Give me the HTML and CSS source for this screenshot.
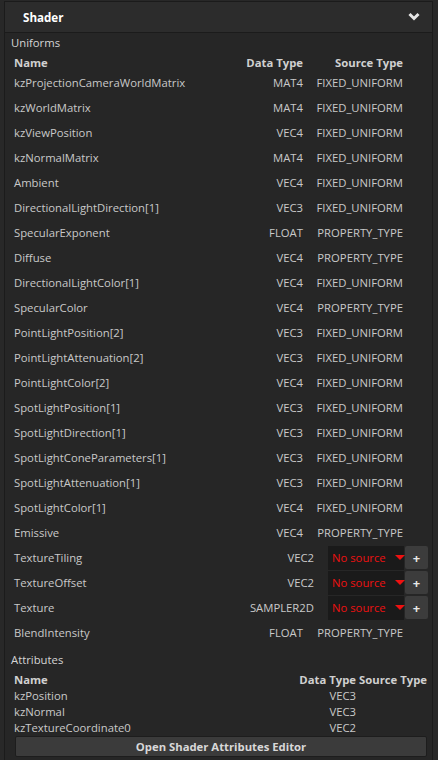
FILE: index.html
```html
<!DOCTYPE html>
<html lang="en">
<head>
  <meta charset="UTF-8" />
  <meta name="viewport" content="width=device-width, initial-scale=1.0" />
  <title>Shader</title>
  <link rel="stylesheet" href="styles.css">
</head>
<body>
  <div class="panel">
    <div class="head">
      <span class="title">Shader</span>
      <svg class="chev" width="12" height="9" viewBox="0 0 12 9"><polyline points="1.5,2 6,6.5 10.5,2" fill="none" stroke="#e6e6e6" stroke-width="3"/></svg>
    </div>

    <div class="label">Uniforms</div>
    <div class="row th">
      <span class="name">Name</span><span class="dtype">Data Type</span><span class="stype">Source Type</span>
    </div>
    <div id="uniforms"></div>

    <div class="label attr-label">Attributes</div>
    <div class="arow th">
      <span class="name">Name</span><span class="dtype">Data Type</span><span class="stype">Source Type</span>
    </div>
    <div class="arow"><span class="name">kzPosition</span><span class="dtype">VEC3</span><span class="stype"></span></div>
    <div class="arow"><span class="name">kzNormal</span><span class="dtype">VEC3</span><span class="stype"></span></div>
    <div class="arow"><span class="name">kzTextureCoordinate0</span><span class="dtype">VEC2</span><span class="stype"></span></div>

    <button class="editor">Open Shader Attributes Editor</button>
  </div>

  <script>
    var uniforms = [
      ["kzProjectionCameraWorldMatrix", "MAT4", "FIXED_UNIFORM"],
      ["kzWorldMatrix", "MAT4", "FIXED_UNIFORM"],
      ["kzViewPosition", "VEC4", "FIXED_UNIFORM"],
      ["kzNormalMatrix", "MAT4", "FIXED_UNIFORM"],
      ["Ambient", "VEC4", "FIXED_UNIFORM"],
      ["DirectionalLightDirection[1]", "VEC3", "FIXED_UNIFORM"],
      ["SpecularExponent", "FLOAT", "PROPERTY_TYPE"],
      ["Diffuse", "VEC4", "PROPERTY_TYPE"],
      ["DirectionalLightColor[1]", "VEC4", "FIXED_UNIFORM"],
      ["SpecularColor", "VEC4", "PROPERTY_TYPE"],
      ["PointLightPosition[2]", "VEC3", "FIXED_UNIFORM"],
      ["PointLightAttenuation[2]", "VEC3", "FIXED_UNIFORM"],
      ["PointLightColor[2]", "VEC4", "FIXED_UNIFORM"],
      ["SpotLightPosition[1]", "VEC3", "FIXED_UNIFORM"],
      ["SpotLightDirection[1]", "VEC3", "FIXED_UNIFORM"],
      ["SpotLightConeParameters[1]", "VEC3", "FIXED_UNIFORM"],
      ["SpotLightAttenuation[1]", "VEC3", "FIXED_UNIFORM"],
      ["SpotLightColor[1]", "VEC4", "FIXED_UNIFORM"],
      ["Emissive", "VEC4", "PROPERTY_TYPE"],
      ["TextureTiling", "VEC2", null],
      ["TextureOffset", "VEC2", null],
      ["Texture", "SAMPLER2D", null],
      ["BlendIntensity", "FLOAT", "PROPERTY_TYPE"]
    ];

    var list = document.getElementById("uniforms");
    uniforms.forEach(function (u) {
      var row = document.createElement("div");
      if (u[2]) {
        row.className = "row";
        row.innerHTML = '<span class="name">' + u[0] + '</span><span class="dtype">' + u[1] +
          '</span><span class="stype">' + u[2] + '</span>';
      } else {
        row.className = "row pick";
        row.innerHTML = '<span class="name">' + u[0] + '</span><span class="dtype">' + u[1] +
          '</span><span class="select">No source<i class="tri"></i></span><span class="plus">+</span>';
      }
      list.appendChild(row);
    });
  </script>
</body>
</html>
```

FILE: styles.css
```css
body { margin: 0; background: #282828; font-family: "Open Sans", "Noto Sans", sans-serif; font-size: 11.3px; color: #c9c9c9; }
.panel { margin: 1px 5px 0 4px; background: #262626; border-left: 1px solid #1b1b1b; border-right: 1px solid #1b1b1b; border-top: 1px solid #1b1b1b; height: 759px; box-sizing: border-box; }
.head { height: 30px; background: #2c2c2c; border-bottom: 1px solid #1b1b1b; display: flex; align-items: center; justify-content: space-between; padding: 0 12px 0 18px; }
.title { color: #fff; font-weight: bold; font-size: 11.6px; }
.chev { display: block; margin-top: -2px; }

.label { line-height: 20px; padding-left: 6px; color: #d4d4d4; }
.row { display: flex; align-items: center; height: 25px; padding-left: 9px; white-space: nowrap; }
.row.th { height: 15px; margin-top: 2px; font-weight: bold; color: #d0d0d0; }
.name { flex: 1; white-space: nowrap; }
.dtype { width: 90px; text-align: right; white-space: nowrap; }
.stype { width: 89px; margin-left: 11px; margin-right: 29px; text-align: right; white-space: nowrap; }

.pick .dtype { margin-right: -5px; }
.select { width: 76px; height: 24px; margin-left: 19px; background: #1a1a1a; color: #ee1111; display: flex; align-items: center; padding-left: 4px; box-sizing: border-box; white-space: nowrap; }
.tri { width: 0; height: 0; border-left: 5px solid transparent; border-right: 5px solid transparent; border-top: 5px solid #ee1111; margin-left: 9px; }
.plus { width: 23px; height: 23px; margin-left: 1px; margin-right: 4px; background: #3c3c3c; border-radius: 2px; color: #e8e8e8; font-weight: bold; font-size: 13px; display: flex; align-items: center; justify-content: center; }

.attr-label { margin-top: 5px; }
.arow { display: flex; align-items: center; height: 16px; padding-left: 9px; white-space: nowrap; }
.arow.th { font-weight: bold; color: #d0d0d0; margin-top: 1px; }
.arow .dtype { width: 62px; }
.arow .stype { width: 72px; margin-left: 3px; margin-right: 1px; text-align: left; }

.editor { display: block; margin: 1px 0 0 10px; width: 412px; height: 21px; background: #3b3b3b; border: 1px solid #1d1d1d; border-radius: 2px; color: #d8d8d8; font-family: inherit; font-size: 11.3px; font-weight: bold; padding: 0; }
```
